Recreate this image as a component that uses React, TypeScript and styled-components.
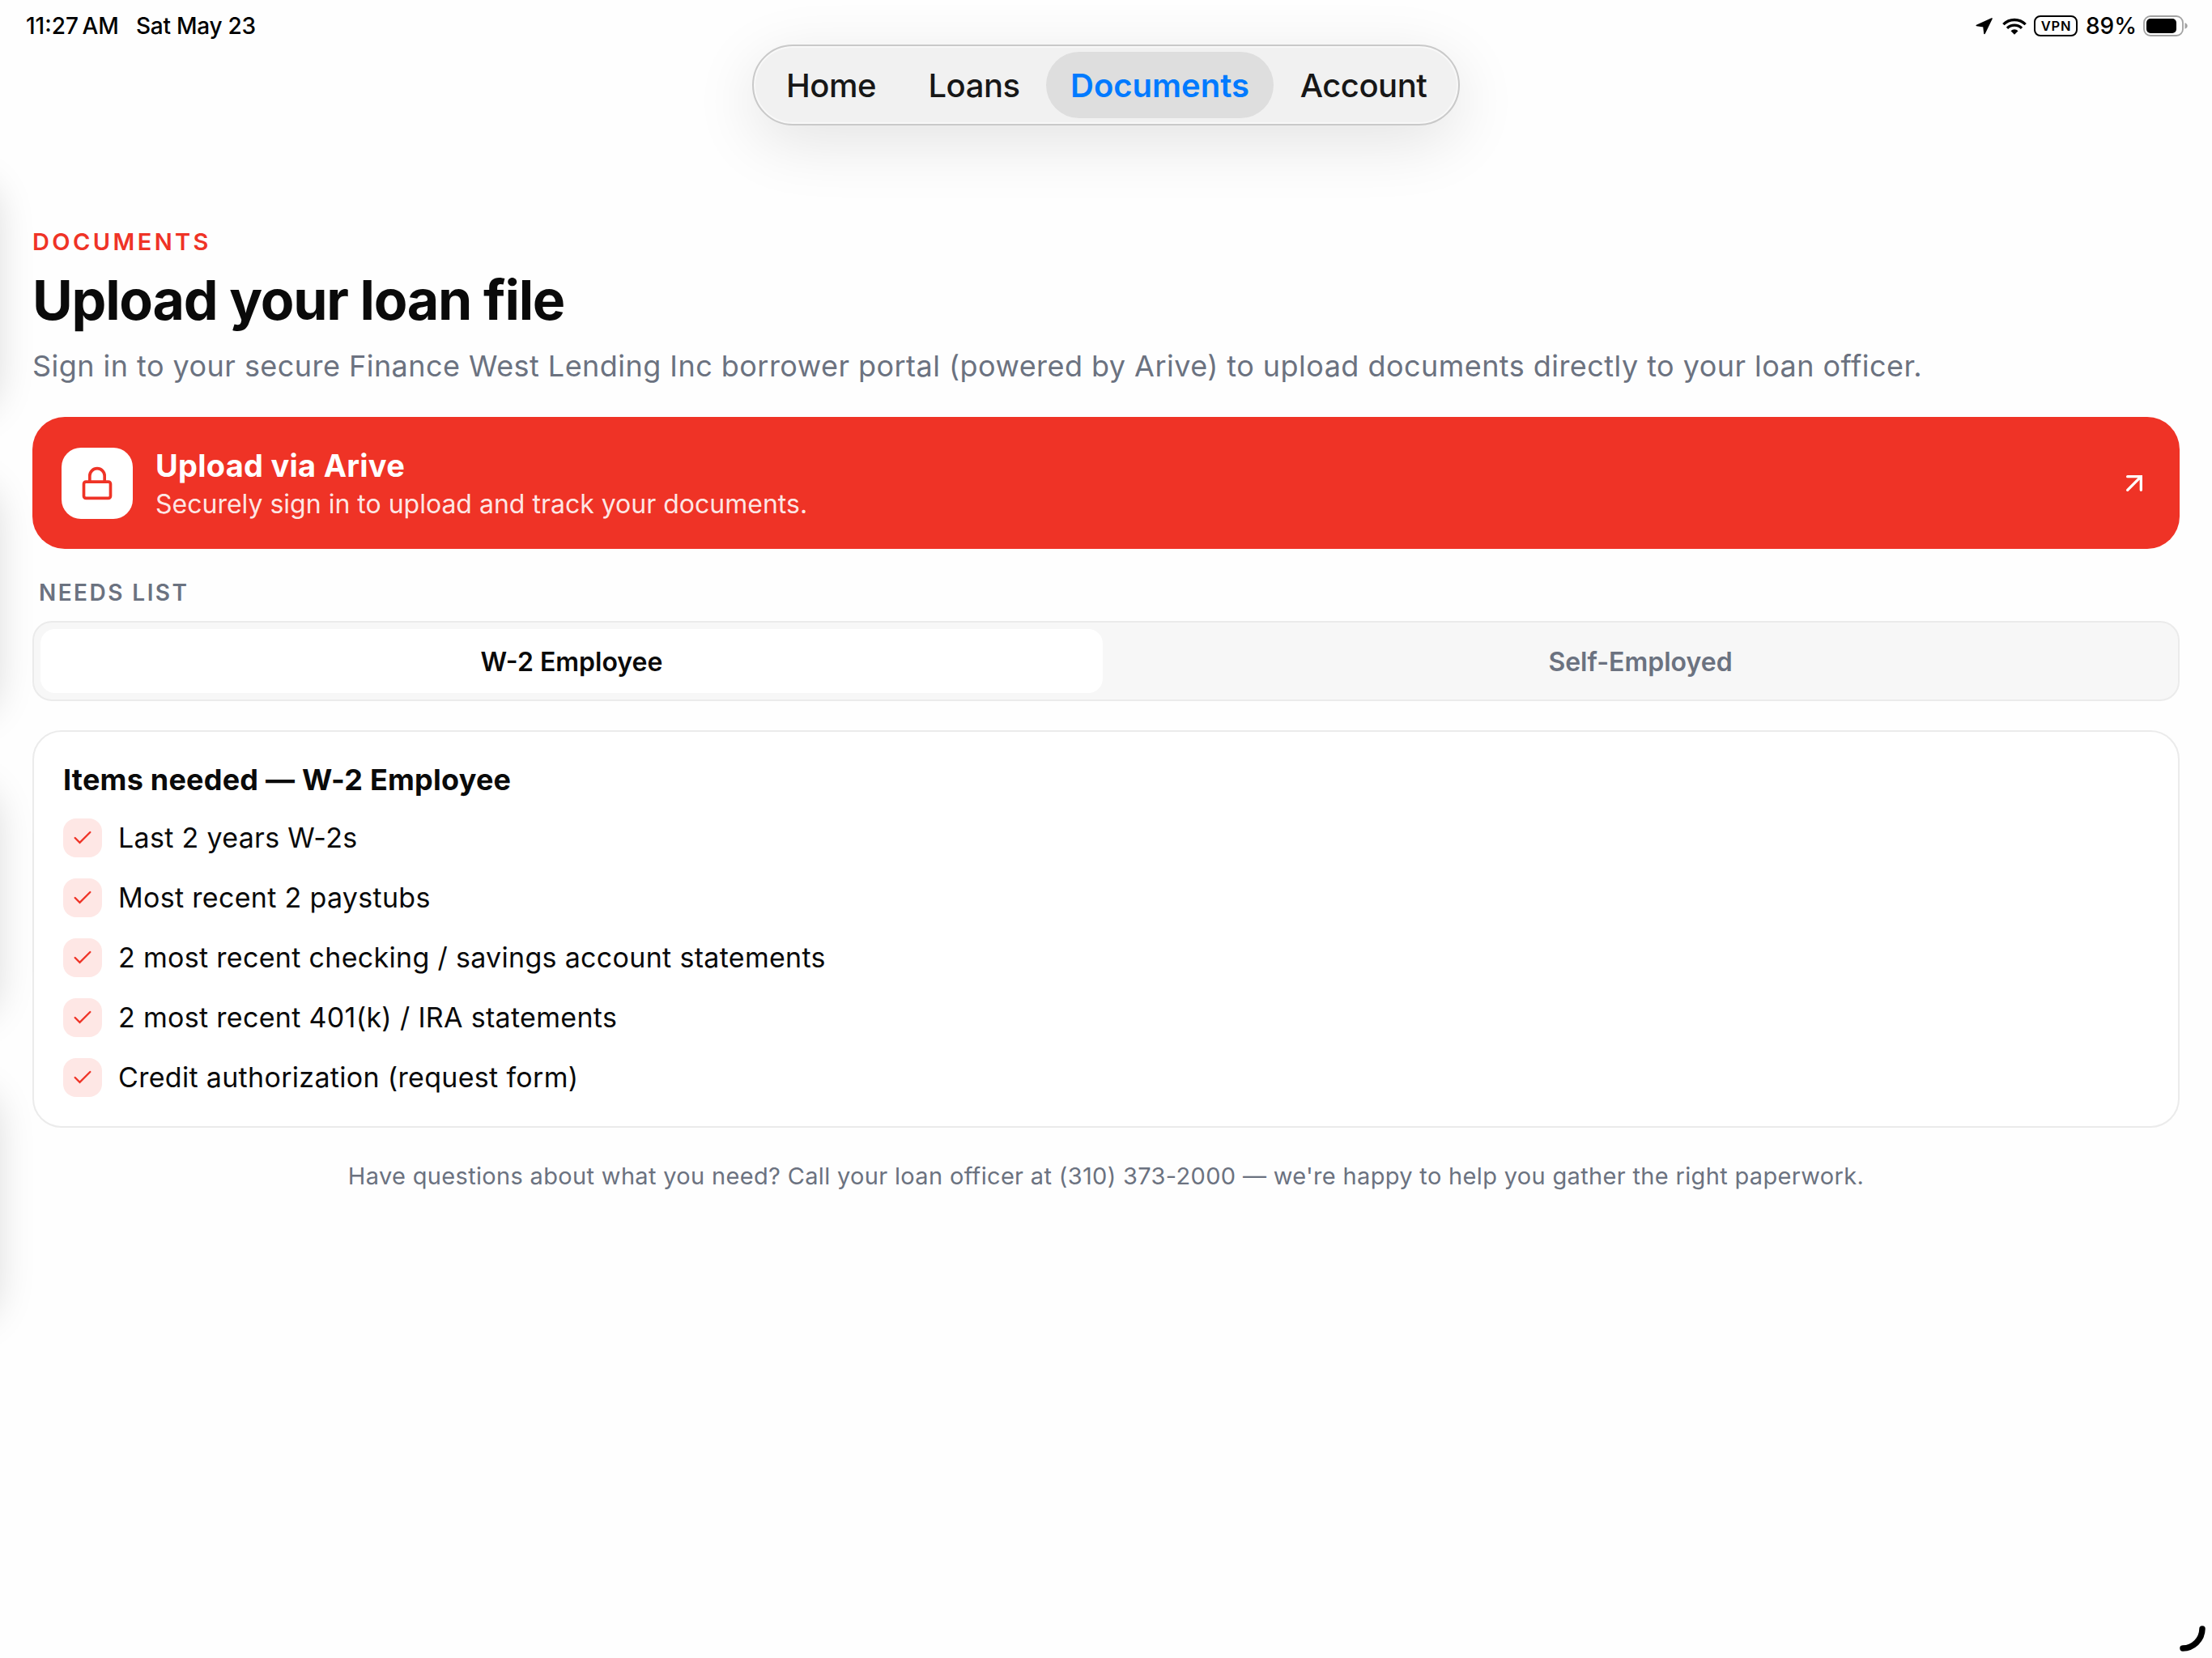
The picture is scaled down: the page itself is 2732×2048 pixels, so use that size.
import React, { useState } from "react";
import styled, { createGlobalStyle } from "styled-components";

const color = {
  ink: "#0a0a0a",
  muted: "#6b7280",
  brand: "#ef3326",
  brandSoft: "#fee7e5",
  line: "#ebebeb",
  surface: "#f7f7f7",
  page: "#fefefe",
};

const GlobalStyle = createGlobalStyle`
  *, *::before, *::after { box-sizing: border-box; }
  body {
    margin: 0;
    background: ${color.page};
    color: ${color.ink};
    font-family: Inter, "Noto Sans", sans-serif;
  }
`;

const Screen = styled.div`
  position: relative;
  display: flex;
  flex-direction: column;
  width: 100%;
  height: 100vh;
  overflow: hidden;
`;

/* ---------- status bar ---------- */

const StatusBar = styled.header`
  display: flex;
  justify-content: space-between;
  align-items: center;
  height: 55px;
  padding: 9px 29px 0 32px;
  color: #000;
  font-size: 28px;
  font-weight: 500;
  line-height: 46px;
`;

const StatusGroup = styled.div`
  display: flex;
  align-items: center;
  height: 46px;
`;

const Clock = styled.span`
  width: 136px;
  word-spacing: -3px;
`;

const Today = styled.span`
  letter-spacing: -0.25px;
`;

const VpnBadge = styled.span`
  display: flex;
  align-items: center;
  justify-content: center;
  width: 54px;
  height: 26px;
  margin: 0 10px 0 9px;
  padding-left: 1px;
  border: 2.5px solid #000;
  border-radius: 8px;
  font-size: 16.5px;
  font-weight: 600;
  letter-spacing: 0.8px;
  line-height: 20px;
`;

const Percent = styled.span`
  width: 71px;
`;

/* ---------- floating tab bar ---------- */

const TabBar = styled.nav`
  display: flex;
  align-self: center;
  gap: 2px;
  width: 874px;
  height: 100px;
  padding: 7px 8px;
  border: 2px solid #c9c9c9;
  border-radius: 50px;
  background: #f1f1f1;
  box-shadow: 0 20px 80px rgba(0, 0, 0, 0.11), inset 0 0 0 2px rgba(255, 255, 255, 0.5);
`;

const TabItem = styled.button<{ $active: boolean; $width: number }>`
  flex: none;
  width: ${(p) => p.$width}px;
  height: 82px;
  padding: 0;
  border: 0;
  border-radius: 41px;
  background: ${(p) => (p.$active ? "#dedede" : "transparent")};
  color: ${(p) => (p.$active ? "#007aff" : "#171717")};
  font: ${(p) => (p.$active ? 600 : 500)} 40px/84px Inter, sans-serif;
  letter-spacing: ${(p) => (p.$active ? 0 : -0.5)}px;
`;

/* ---------- page ---------- */

const Main = styled.main`
  display: flex;
  flex-direction: column;
  padding: 126px 40px 0;
`;

const Eyebrow = styled.p`
  margin: 0;
  color: ${color.brand};
  font-size: 29px;
  font-weight: 600;
  line-height: 36px;
  letter-spacing: 3.4px;
`;

const Title = styled.h1`
  margin: 13px 0 0;
  font-size: 68px;
  font-weight: 700;
  line-height: 80px;
  letter-spacing: -1.24px;
`;

const Lede = styled.p`
  margin: 16px 0 0;
  color: ${color.muted};
  font-size: 36px;
  line-height: 52px;
  letter-spacing: 0.455px;
  white-space: nowrap;
`;

const Banner = styled.a`
  display: flex;
  align-items: center;
  gap: 28px;
  height: 163px;
  margin-top: 37px;
  padding: 0 36px;
  border-radius: 40px;
  background: ${color.brand};
  color: #fff;
`;

const BannerIcon = styled.span`
  display: grid;
  place-items: center;
  width: 88px;
  height: 88px;
  border-radius: 24px;
  background: #fff;
  color: ${color.brand};
`;

const BannerText = styled.div`
  display: flex;
  flex: 1;
  flex-direction: column;
  gap: 5px;
  padding-top: 2px;
`;

const BannerTitle = styled.span`
  font-size: 38px;
  font-weight: 700;
  line-height: 46px;
  letter-spacing: 0.25px;
`;

const BannerNote = styled.span`
  color: rgba(255, 255, 255, 0.9);
  font-size: 32px;
  line-height: 40px;
`;

const SectionLabel = styled.h2`
  margin: 37px 0 18px;
  padding-left: 8px;
  color: ${color.muted};
  font-size: 28px;
  font-weight: 600;
  line-height: 34px;
  letter-spacing: 2.45px;
`;

const Segmented = styled.div`
  display: flex;
  gap: 8px;
  height: 99px;
  padding: 8px;
  border: 2px solid ${color.line};
  border-radius: 24px;
  background: ${color.surface};
`;

const Segment = styled.button<{ $active: boolean }>`
  flex: 1;
  padding: 3px 0 0;
  border: 0;
  border-radius: 18px;
  background: ${(p) => (p.$active ? "#fff" : "transparent")};
  color: ${(p) => (p.$active ? color.ink : color.muted)};
  font: 600 32px/40px Inter, sans-serif;
`;

const Card = styled.section`
  height: 491px;
  margin-top: 36px;
  padding: 37px 36px 36px;
  border: 2px solid ${color.line};
  border-radius: 36px;
  background: #fff;
`;

const CardTitle = styled.h3`
  margin: 0 0 26px;
  font-size: 36px;
  font-weight: 700;
  line-height: 44px;
  letter-spacing: 0.22px;
`;

const Checklist = styled.ul`
  display: flex;
  flex-direction: column;
  gap: 26px;
  margin: 0;
  padding: 0;
  list-style: none;
`;

const ChecklistRow = styled.li`
  display: flex;
  align-items: center;
  gap: 20px;
  height: 48px;
  font-size: 34px;
  line-height: 48px;
  letter-spacing: 0.31px;
`;

const CheckBox = styled.span`
  display: grid;
  place-items: center;
  width: 48px;
  height: 48px;
  border-radius: 16px;
  background: ${color.brandSoft};
  color: ${color.brand};
`;

const Footnote = styled.p`
  margin: 40px 0 0;
  color: ${color.muted};
  font-size: 29px;
  line-height: 40px;
  letter-spacing: 0.33px;
  text-align: center;
`;

/* ---------- overlays ---------- */

const EdgeCards = styled.div`
  position: absolute;
  top: 224px;
  right: 100%;
  display: flex;
  flex-direction: column;
  gap: 88px;
  width: 300px;
  padding-right: 4px;
  pointer-events: none;
`;

const EdgeCard = styled.div`
  height: 286px;
  border-radius: 40px;
  box-shadow: 0 0 48px rgba(0, 0, 0, 0.15);
`;

const CornerMark = styled.svg`
  position: absolute;
  right: 8px;
  bottom: 8px;
`;

/* ---------- icons ---------- */

const LineIcon = ({ size, children }: { size: number; children: React.ReactNode }) => (
  <svg
    width={size}
    height={size}
    viewBox="0 0 24 24"
    fill="none"
    stroke="currentColor"
    strokeWidth={2}
    strokeLinecap="round"
    strokeLinejoin="miter"
  >
    {children}
  </svg>
);

const LockIcon = () => (
  <LineIcon size={44}>
    <rect x="3" y="11" width="18" height="11" rx="1.4" />
    <path d="M7 11V7a5 5 0 0 1 10 0v4" />
  </LineIcon>
);

const ArrowIcon = () => (
  <LineIcon size={40}>
    <path d="M7 17 17 7M7 7h10v10" />
  </LineIcon>
);

const CheckIcon = () => (
  <LineIcon size={28}>
    <path d="M20 6 9 17l-5-5" />
  </LineIcon>
);

const LocationIcon = () => (
  <svg width="21" height="21" viewBox="0 0 63 63">
    <path
      d="M60 3 4 28.500 30 32 33 58Z"
      fill="#000"
      stroke="#000"
      strokeWidth="5"
      strokeLinejoin="round"
    />
  </svg>
);

const WifiSvg = styled.svg`
  margin-left: 12px;
`;

const WifiIcon = () => (
  <WifiSvg width="30" height="21" viewBox="0 0 90 63">
    <g fill="none" stroke="#000" strokeWidth="10">
      <path d="M4 24.500A58 58 0 0 1 86 24.500" />
      <path d="M18 38.500A38.500 38.500 0 0 1 72 38.500" />
    </g>
    <path d="M45 62 31.500 48.500A19 19 0 0 1 58.500 48.500Z" fill="#000" />
  </WifiSvg>
);

const BatteryIcon = () => (
  <svg width="56" height="26" viewBox="0 0 56 26">
    <rect x="1" y="1" width="48" height="24" rx="8" fill="none" stroke="#a2a2a2" strokeWidth="1.800" />
    <rect x="4" y="4" width="37" height="18" rx="5" fill="#000" />
    <path d="M51.500 9.300c2 .6 3.200 2 3.200 3.700s-1.200 3.100-3.200 3.700Z" fill="#a2a2a2" />
  </svg>
);

/* ---------- data ---------- */

const tabs = [
  { label: "Home", width: 175 },
  { label: "Loans", width: 174 },
  { label: "Documents", width: 281 },
  { label: "Account", width: 218 },
];

const needs: Record<string, string[]> = {
  "W-2 Employee": [
    "Last 2 years W-2s",
    "Most recent 2 paystubs",
    "2 most recent checking / savings account statements",
    "2 most recent 401(k) / IRA statements",
    "Credit authorization (request form)",
  ],
  "Self-Employed": [],
};

export default function App() {
  const [kind, setKind] = useState("W-2 Employee");

  return (
    <Screen>
      <GlobalStyle />
      <StatusBar>
        <StatusGroup>
          <Clock>11:27 AM</Clock>
          <Today>Sat May 23</Today>
        </StatusGroup>
        <StatusGroup>
          <LocationIcon />
          <WifiIcon />
          <VpnBadge>VPN</VpnBadge>
          <Percent>89%</Percent>
          <BatteryIcon />
        </StatusGroup>
      </StatusBar>

      <TabBar>
        {tabs.map((t) => (
          <TabItem key={t.label} $width={t.width} $active={t.label === "Documents"}>
            {t.label}
          </TabItem>
        ))}
      </TabBar>

      <Main>
        <Eyebrow>DOCUMENTS</Eyebrow>
        <Title>Upload your loan file</Title>
        <Lede>
          Sign in to your secure Finance West Lending Inc borrower portal (powered by Arive) to
          upload documents directly to your loan officer.
        </Lede>

        <Banner>
          <BannerIcon>
            <LockIcon />
          </BannerIcon>
          <BannerText>
            <BannerTitle>Upload via Arive</BannerTitle>
            <BannerNote>Securely sign in to upload and track your documents.</BannerNote>
          </BannerText>
          <ArrowIcon />
        </Banner>

        <SectionLabel>NEEDS LIST</SectionLabel>
        <Segmented>
          {Object.keys(needs).map((k) => (
            <Segment key={k} $active={k === kind} onClick={() => setKind(k)}>
              {k}
            </Segment>
          ))}
        </Segmented>

        <Card>
          <CardTitle>Items needed — {kind}</CardTitle>
          <Checklist>
            {needs[kind].map((item) => (
              <ChecklistRow key={item}>
                <CheckBox>
                  <CheckIcon />
                </CheckBox>
                {item}
              </ChecklistRow>
            ))}
          </Checklist>
        </Card>

        <Footnote>
          Have questions about what you need? Call your loan officer at (310) 373-2000 — we're happy
          to help you gather the right paperwork.
        </Footnote>
      </Main>

      <EdgeCards>
        <EdgeCard />
        <EdgeCard />
        <EdgeCard />
        <EdgeCard />
      </EdgeCards>
      <CornerMark width="32" height="32" viewBox="0 0 32 32">
        <path d="M28 4A24.500 24.500 0 0 1 4 28" fill="none" stroke="#000" strokeWidth="7.500" strokeLinecap="round" />
      </CornerMark>
    </Screen>
  );
}
